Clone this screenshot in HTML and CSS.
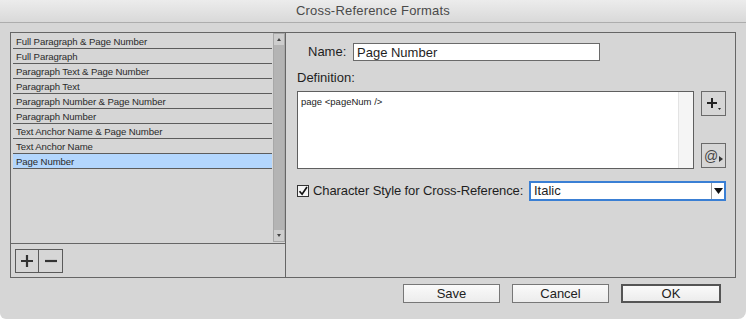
FILE: index.html
```html
<!DOCTYPE html>
<html lang="en">
<head>
  <meta charset="UTF-8">
  <title>Cross-Reference Formats</title>
  <link rel="stylesheet" href="styles.css">
</head>
<body>
  <div class="window">
    <div class="titlebar">Cross-Reference Formats</div>

    <div class="content">
      <div class="panels">
        <div class="left-panel">
          <div class="list-area">
            <ul class="format-list">
              <li>Full Paragraph &amp; Page Number</li>
              <li>Full Paragraph</li>
              <li>Paragraph Text &amp; Page Number</li>
              <li>Paragraph Text</li>
              <li>Paragraph Number &amp; Page Number</li>
              <li>Paragraph Number</li>
              <li>Text Anchor Name &amp; Page Number</li>
              <li>Text Anchor Name</li>
              <li class="selected">Page Number</li>
            </ul>
            <div class="scrollbar">
              <div class="arrow up"></div>
              <div class="track"></div>
              <div class="arrow down"></div>
            </div>
          </div>
          <div class="list-tools">
            <div class="tool-btn">
              <svg width="14" height="14" viewBox="0 0 14 14"><path d="M7 1v12M1 7h12" stroke="#333" stroke-width="2.2"/></svg>
            </div>
            <div class="tool-btn">
              <svg width="14" height="14" viewBox="0 0 14 14"><path d="M1 7h12" stroke="#333" stroke-width="2.2"/></svg>
            </div>
          </div>
        </div>

        <div class="right-panel">
          <div class="name-row">
            <label>Name:</label>
            <div class="text-input">Page Number</div>
          </div>
          <div class="def-label">Definition:</div>
          <div class="def-row">
            <div class="def-box">
              <div class="def-text">page &lt;pageNum /&gt;</div>
              <div class="def-gutter"></div>
            </div>
            <div class="def-tools">
              <div class="icon-btn">
                <svg width="16" height="16" viewBox="0 0 16 16">
                  <path d="M6 2v10M1 7h10" stroke="#222" stroke-width="2"/>
                  <path d="M12 12h3l-1.5 2z" fill="#222"/>
                </svg>
              </div>
              <div class="icon-btn at-btn">
                <span class="at">@</span>
                <svg class="caret" width="4" height="6" viewBox="0 0 4 6"><path d="M0 0l4 3-4 3z" fill="#333"/></svg>
              </div>
            </div>
          </div>
          <div class="style-row">
            <div class="checkbox">
              <svg width="12" height="12" viewBox="0 0 12 12"><path d="M2.5 6.2l2.6 3L10 2" fill="none" stroke="#111" stroke-width="1.7"/></svg>
            </div>
            <span class="style-label">Character Style for Cross-Reference:</span>
            <div class="select">
              <span class="select-value">Italic</span>
              <span class="select-arrow">
                <svg width="9" height="6" viewBox="0 0 9 6"><path d="M0 0h9L4.5 6z" fill="#111"/></svg>
              </span>
            </div>
          </div>
        </div>
      </div>

      <div class="footer">
        <div class="btn">Save</div>
        <div class="btn">Cancel</div>
        <div class="btn default">OK</div>
      </div>
    </div>
  </div>
</body>
</html>
```

FILE: styles.css
```css
* {
  margin: 0;
  padding: 0;
  box-sizing: border-box;
}

body {
  width: 746px;
  height: 319px;
  background: #ffffff;
  font-family: "Liberation Sans", Arial, sans-serif;
  color: #1e1e1e;
  overflow: hidden;
}

.window {
  width: 746px;
  height: 319px;
  background: #d6d6d6;
  border-radius: 0 0 8px 6px;
  overflow: hidden;
}

.titlebar {
  height: 23px;
  background: linear-gradient(#ececec, #d9d9d9);
  border-bottom: 1px solid #adadad;
  text-align: center;
  font-size: 13px;
  line-height: 22px;
  color: #4a4a4a;
  letter-spacing: 0.2px;
}

.content {
  padding: 9px 10px 0 10px;
}

.panels {
  display: flex;
  height: 246px;
}

/* left list panel */
.left-panel {
  width: 276px;
  border: 1px solid #666;
  display: flex;
  flex-direction: column;
}

.list-area {
  height: 211px;
  display: flex;
  padding: 1px 0 1px 2px;
  border-bottom: 1px solid #666;
}

.format-list {
  list-style: none;
  width: 259px;
}

.format-list li {
  height: 15px;
  line-height: 15px;
  font-size: 9.6px;
  letter-spacing: -0.1px;
  padding-left: 3px;
  border-bottom: 1px solid #5c5c5c;
  color: #2a2a2a;
}

.format-list li.selected {
  background: #b3d6fd;
}

.scrollbar {
  width: 12px;
  margin: -1px 0 0 1px;
  background: #b4b4b4;
  border: 1px solid #a8a8a8;
  display: flex;
  flex-direction: column;
}

.scrollbar .track {
  flex: 1;
}

.scrollbar .arrow {
  height: 11px;
  background: #cdcdcd;
  position: relative;
}

.scrollbar .arrow::after {
  content: '';
  position: absolute;
  left: 3px;
  top: 4px;
  border-left: 2.5px solid transparent;
  border-right: 2.5px solid transparent;
}

.scrollbar .arrow.up::after {
  border-bottom: 3px solid #444;
}

.scrollbar .arrow.down::after {
  border-top: 3px solid #444;
}

.list-tools {
  display: flex;
  padding: 5px 0 0 4px;
}

.tool-btn {
  width: 24px;
  height: 24px;
  border: 1px solid #5a5a5a;
  display: flex;
  align-items: center;
  justify-content: center;
}

.tool-btn + .tool-btn {
  border-left: none;
}

/* right definition panel */
.right-panel {
  width: 450px;
  border: 1px solid #666;
  border-left: none;
  padding: 10px 0 0 11px;
  font-size: 13px;
}

.name-row {
  display: flex;
  align-items: center;
  height: 17px;
  padding-left: 11px;
}

.name-row label {
  width: 45px;
}

.text-input {
  width: 247px;
  height: 18px;
  background: #fff;
  border: 1px solid #6a6a6a;
  padding-left: 3px;
  line-height: 17px;
  font-size: 13px;
}

.def-label {
  margin-top: 10px;
  line-height: 16px;
}

.def-row {
  display: flex;
  gap: 7px;
  margin-top: 5px;
}

.def-box {
  width: 397px;
  height: 78px;
  background: #fff;
  border: 1px solid #5f5f5f;
  display: flex;
}

.def-text {
  flex: 1;
  font-size: 9.5px;
  padding: 4px 0 0 3px;
  color: #222;
}

.def-gutter {
  width: 15px;
  background: #f5f5f5;
  border-left: 1px solid #e3e3e3;
}

.def-tools {
  display: flex;
  flex-direction: column;
  justify-content: space-between;
  height: 78px;
  padding-bottom: 1px;
}

.icon-btn {
  width: 25px;
  height: 25px;
  border: 1px solid #6a6a6a;
  display: flex;
  align-items: center;
  justify-content: center;
}

.at-btn {
  gap: 1px;
}

.at {
  font-size: 14px;
  color: #444;
  line-height: 14px;
}

.at-btn .caret {
  margin-top: 7px;
}

.style-row {
  display: flex;
  align-items: center;
  height: 19px;
  margin-top: 12px;
}

.checkbox {
  flex: none;
  width: 12px;
  height: 12px;
  border: 1px solid #333;
  background: #f4f4f4;
  display: flex;
  align-items: center;
  justify-content: center;
  margin-right: 4px;
}

.checkbox svg {
  flex: none;
}

.style-label {
  flex: none;
  width: 216px;
  white-space: nowrap;
  letter-spacing: -0.1px;
}

.select {
  flex: none;
  width: 197px;
  height: 20px;
  background: #fff;
  border: 2px solid #3a7fd4;
  display: flex;
  align-items: center;
}

.select-value {
  flex: 1;
  padding-left: 3px;
}

.select-arrow {
  width: 13px;
  height: 16px;
  border-left: 1px solid #9a9a9a;
  display: flex;
  align-items: center;
  justify-content: center;
}

/* dialog buttons */
.footer {
  display: flex;
  justify-content: flex-end;
  gap: 12px;
  padding: 6px 15px 0 0;
}

.btn {
  width: 97px;
  height: 19px;
  background: linear-gradient(#fafafa, #ececec);
  border: 1px solid #777;
  text-align: center;
  font-size: 13px;
  line-height: 17px;
  color: #222;
}

.btn.default {
  width: 100px;
  border: 2px solid #555;
  line-height: 15px;
}
```
